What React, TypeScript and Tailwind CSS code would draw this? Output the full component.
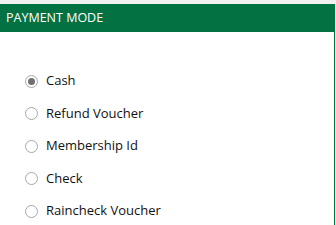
import { useState } from 'react';

const modes = ['Cash', 'Refund Voucher', 'Membership Id', 'Check', 'Raincheck Voucher'];

function Radio({ checked }: { checked: boolean }) {
  return (
    <span className="flex h-[13px] w-[13px] items-center justify-center rounded-full border border-[#a8a8a8] bg-white">
      {checked && <span className="h-[7px] w-[7px] rounded-full bg-[#707070]" />}
    </span>
  );
}

export default function App() {
  const [mode, setMode] = useState('Cash');

  return (
    <div className="h-[225px] w-[336px] overflow-hidden bg-[#f0f0f0] pt-[4px] font-['Open_Sans',sans-serif]">
      <div className="flex h-[221px] w-[335px] flex-col border-r border-[#047143] bg-white">
        <div className="flex h-[28px] items-center bg-[#047143] px-[6px] text-[12.5px] text-white">
          PAYMENT MODE
        </div>
        <div className="flex flex-col gap-[12.5px] pl-[25px] pt-[39px]">
          {modes.map((m) => (
            <label
              key={m}
              className="flex h-[20px] cursor-pointer items-center gap-[8px] text-[13px] text-[#111]"
              onClick={() => setMode(m)}
            >
              <Radio checked={mode === m} />
              <span>{m}</span>
            </label>
          ))}
        </div>
      </div>
    </div>
  );
}
